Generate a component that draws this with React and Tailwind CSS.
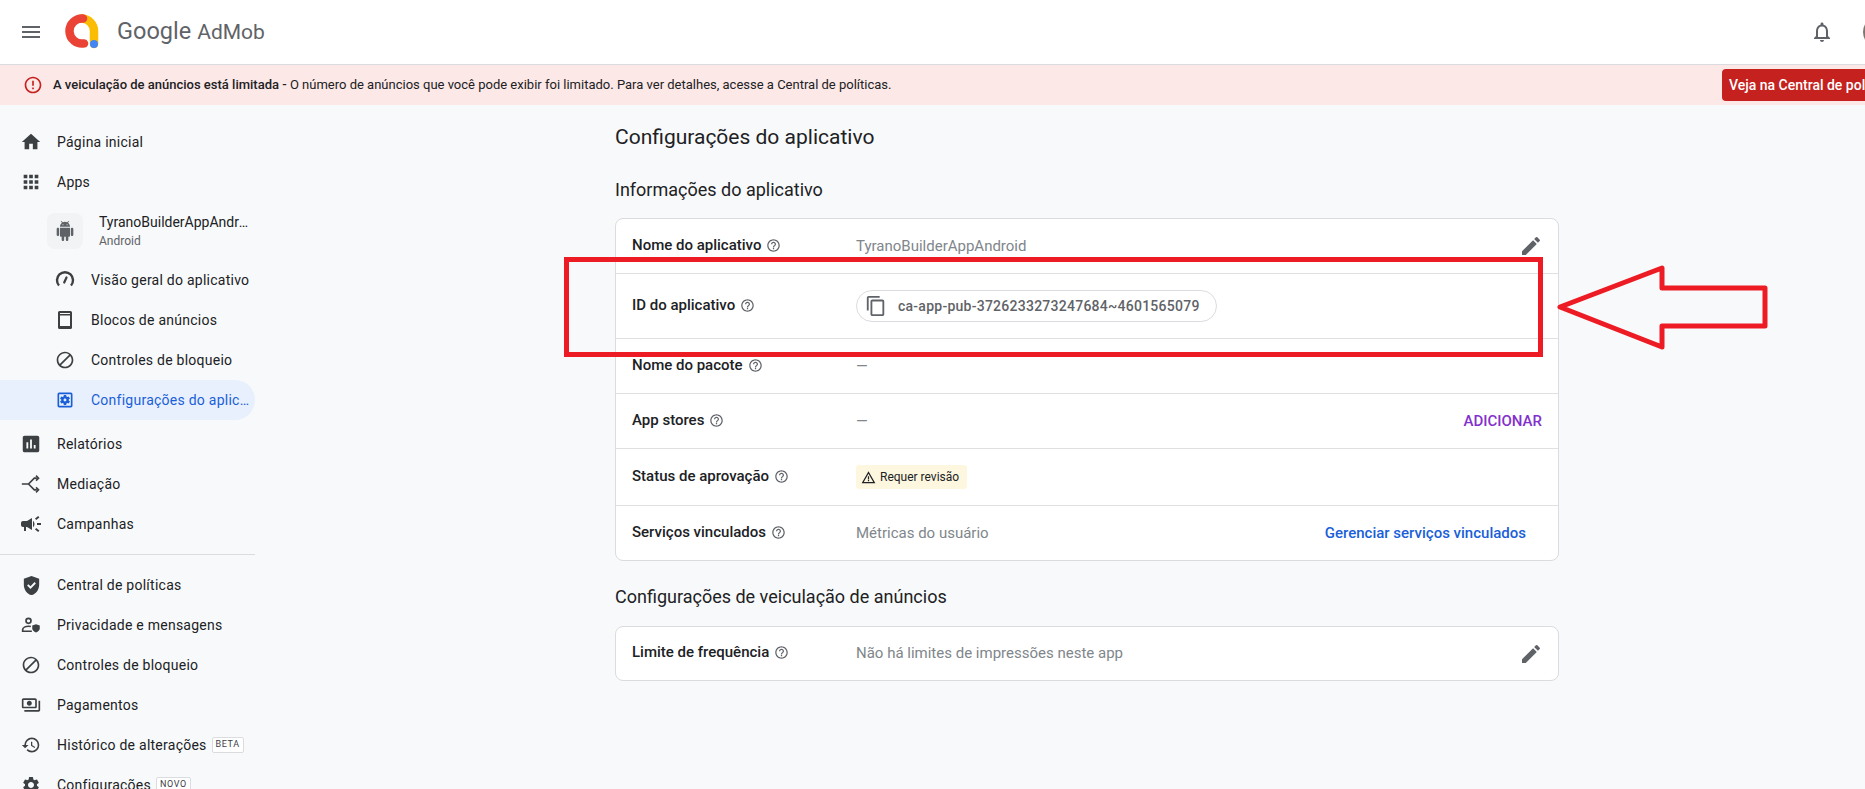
import {
  MdMenu, MdHome, MdApps, MdBlock, MdAssessment, MdCampaign,
  MdGppGood, MdErrorOutline, MdNotificationsNone, MdHelpOutline, MdEdit, MdContentCopy,
  MdWarningAmber, MdOutlineSettingsApplications, MdHistory, MdSettings, MdOutlinePayments,
} from 'react-icons/md'

function Logo() {
  return (
    <svg width="36" height="36" viewBox="0 0 36 36" fill="none" className="shrink-0">
      <path d="M18 4.5A12.5 12.5 0 0 1 30 17V30" stroke="#fbbc04" strokeWidth="8.5" strokeLinecap="round" />
      <path d="M19 4.6A12.5 12.5 0 1 0 20 29.4" stroke="#ea4335" strokeWidth="8.5" strokeLinecap="round" />
      <circle cx="30" cy="30" r="4" fill="#4285f4" />
    </svg>
  )
}

function AndroidIcon() {
  return (
    <svg width="20" height="20" viewBox="0 0 24 24" fill="#5f6368">
      <path d="M6 18c0 .55.45 1 1 1h1v3.500c0 .83.67 1.500 1.500 1.500s1.500-.67 1.500-1.500V19h2v3.500c0 .83.67 1.500 1.500 1.500s1.500-.67 1.500-1.500V19h1c.55 0 1-.45 1-1V8H6v10zM3.500 8C2.670 8 2 8.670 2 9.500v7c0 .83.67 1.500 1.500 1.500S5 17.330 5 16.500v-7C5 8.670 4.330 8 3.500 8zm17 0c-.83 0-1.500.67-1.500 1.500v7c0 .83.67 1.500 1.500 1.500s1.500-.67 1.500-1.500v-7c0-.83-.67-1.500-1.500-1.500zm-4.970-5.840l1.300-1.300c.2-.2.2-.51 0-.71-.2-.2-.51-.2-.71 0l-1.480 1.480C13.850 1.230 12.950 1 12 1c-.96 0-1.860.23-2.660.63L7.850.15c-.2-.2-.51-.2-.71 0-.2.2-.2.51 0 .71l1.310 1.310C6.970 3.260 6 5.010 6 7h12c0-1.990-.97-3.750-2.470-4.840zM10 5H9V4h1v1zm5 0h-1V4h1v1z" />
    </svg>
  )
}

function SpeedIcon() {
  return (
    <svg width="24" height="24" viewBox="0 0 24 24" fill="none" stroke="#3c4043">
      <path d="M6 17.500A8 8 0 1 1 18 17.500" strokeWidth="2.400" />
      <path d="M11.200 14.500l2.300-5" strokeWidth="2.200" strokeLinecap="round" />
    </svg>
  )
}

function AdUnitsIcon() {
  return (
    <svg width="24" height="24" viewBox="0 0 24 24" fill="#3c4043">
      <path fillRule="evenodd" d="M6.500 3h11A1.500 1.500 0 0 1 19 4.500v15a1.500 1.500 0 0 1-1.500 1.500h-11A1.500 1.500 0 0 1 5 19.500v-15A1.500 1.500 0 0 1 6.500 3zM7 5v1h10V5zM7 7.500V18h10V7.500z" />
    </svg>
  )
}

function MediationIcon() {
  return (
    <svg width="20" height="20" viewBox="0 0 24 24" fill="none" stroke="#3c4043" strokeWidth="2">
      <path d="M1 12h8l7-7h3M9 12l7 7h3" />
      <path d="M18 2l3 3-3 3M18 16l3 3-3 3" />
    </svg>
  )
}

function PrivacyIcon() {
  return (
    <svg width="20" height="20" viewBox="0 0 24 24" fill="none">
      <circle cx="9" cy="7" r="3" stroke="#3c4043" strokeWidth="2" />
      <path d="M2 19v-1.500c0-2.500 3.500-4 7-4 1 0 2 .1 2.800.4M1 19.500h12" stroke="#3c4043" strokeWidth="2" />
      <path d="M18 11l4.500 1.500v3.500c0 2.500-1.900 4-4.500 5-2.600-1-4.500-2.500-4.500-5v-3.500z" fill="#3c4043" />
    </svg>
  )
}

function NavItem({ icon: Icon, label, badge, size = 20 }) {
  return (
    <div className="h-10 flex items-center">
      <div className="w-[57px] pl-[19px] shrink-0 text-[#3c4043]">
        <div className="w-6 h-6 flex items-center justify-center">
          <Icon size={size} />
        </div>
      </div>
      <span className="text-[14px] text-[#202124] tracking-[0.25px] whitespace-nowrap">{label}</span>
      {badge && (
        <span className="ml-[5px] h-[16px] px-[3px] flex items-center border border-[#dadce0] bg-white rounded-[2px] text-[9px] tracking-[0.6px] text-[#3c4043]">
          {badge}
        </span>
      )}
    </div>
  )
}

function SubItem({ icon: Icon, label, active, size = 20 }) {
  return (
    <div className={`h-10 w-[255px] flex items-center rounded-r-full ${active ? 'bg-[#e8f0fe] text-[#1a5fd8]' : 'text-[#202124]'}`}>
      <div className={`w-[91px] pl-[53px] shrink-0 ${active ? 'text-[#1a5fd8]' : 'text-[#3c4043]'}`}>
        <div className="w-6 h-6 flex items-center justify-center">
          <Icon size={size} />
        </div>
      </div>
      <span className="text-[14px] tracking-[0.25px] truncate pr-[4px]">{label}</span>
    </div>
  )
}

function Sidebar() {
  return (
    <aside className="w-[255px] shrink-0 pt-[17px]">
      <NavItem icon={MdHome} label="Página inicial" size={22} />
      <NavItem icon={MdApps} label="Apps" size={22} />
      <div className="h-[58px] flex items-center pl-[47px]">
        <div className="w-9 h-9 rounded-lg bg-[#f1f3f4] flex items-center justify-center">
          <AndroidIcon />
        </div>
        <div className="ml-4 w-[156px]">
          <div className="text-[14px] leading-[18px] text-[#202124] truncate">TyranoBuilderAppAndroid</div>
          <div className="text-[12px] leading-[16px] mt-[2px] text-[#5f6368]">Android</div>
        </div>
      </div>
      <SubItem icon={SpeedIcon} label="Visão geral do aplicativo" />
      <SubItem icon={AdUnitsIcon} label="Blocos de anúncios" />
      <SubItem icon={MdBlock} label="Controles de bloqueio" />
      <SubItem icon={MdOutlineSettingsApplications} label="Configurações do aplicativo" active />
      <div className="h-1" />
      <NavItem icon={MdAssessment} label="Relatórios" size={22} />
      <NavItem icon={MediationIcon} label="Mediação" />
      <NavItem icon={MdCampaign} label="Campanhas" size={24} />
      <div className="mt-[10px] mb-[10px] h-px bg-[#dadce0]" />
      <NavItem icon={MdGppGood} label="Central de políticas" size={23} />
      <NavItem icon={PrivacyIcon} label="Privacidade e mensagens" />
      <NavItem icon={MdBlock} label="Controles de bloqueio" />
      <NavItem icon={MdOutlinePayments} label="Pagamentos" />
      <NavItem icon={MdHistory} label="Histórico de alterações" badge="BETA" />
      <NavItem icon={MdSettings} label="Configurações" badge="NOVO" />
    </aside>
  )
}

function Row({ label, height, last, children, right }) {
  return (
    <div className={`${height} flex items-center pl-4 pr-4 ${last ? '' : 'border-b border-[#e0e0e0]'}`}>
      <div className="w-[224px] shrink-0 pb-[2px] flex items-center gap-[5px] text-[15px] font-medium text-[#202124]">
        {label}
        <MdHelpOutline size={15} className="text-[#5f6368]" />
      </div>
      <div className="flex-1 text-[15px] text-[#80868b] flex items-center">{children}</div>
      {right}
    </div>
  )
}

function Content() {
  return (
    <main className="ml-[360px] w-[944px] shrink-0">
      <h1 className="mt-[18px] text-[21px] leading-[28px] text-[#202124]">Configurações do aplicativo</h1>
      <h2 className="mt-[27px] text-[18px] leading-[24px] text-[#202124]">Informações do aplicativo</h2>
      <div className="mt-[16px] bg-white border border-[#dadce0] rounded-lg">
        <Row label="Nome do aplicativo" height="h-[55px]" right={<MdEdit size={24} className="text-[#5f6368] mr-[-1px]" />}>
          TyranoBuilderAppAndroid
        </Row>
        <Row label="ID do aplicativo" height="h-[65px]">
          <div className="h-8 w-[361px] border border-[#dadce0] rounded-full flex items-center pl-[8px] gap-[11px] text-[14px] font-medium text-[#5f6368]">
            <MdContentCopy size={22} />
            <span className="tracking-[0.25px]">ca-app-pub-3726233273247684~4601565079</span>
          </div>
        </Row>
        <Row label="Nome do pacote" height="h-[55px]">—</Row>
        <Row label="App stores" height="h-[55px]" right={<span className="text-[15px] font-medium text-[#8430ce]">ADICIONAR</span>}>
          —
        </Row>
        <Row label="Status de aprovação" height="h-[57px]">
          <div className="h-6 w-[111px] rounded-[3px] bg-[#fef7e0] flex items-center pl-[5px] gap-[4px] text-[12px] text-[#202124]">
            <MdWarningAmber size={15} />
            Requer revisão
          </div>
        </Row>
        <Row label="Serviços vinculados" height="h-[54px]" last right={<span className="mr-4 text-[15px] font-medium text-[#1a5fd8]">Gerenciar serviços vinculados</span>}>
          Métricas do usuário
        </Row>
      </div>
      <h2 className="mt-[24px] text-[18px] leading-[24px] text-[#202124]">Configurações de veiculação de anúncios</h2>
      <div className="mt-[17px] bg-white border border-[#dadce0] rounded-lg">
        <Row label="Limite de frequência" height="h-[53px]" last right={<MdEdit size={24} className="text-[#5f6368] mr-[-1px]" />}>
          Não há limites de impressões neste app
        </Row>
      </div>
    </main>
  )
}

export default function App() {
  return (
    <div className="relative w-[1865px] h-[789px] overflow-hidden bg-[#f8f9fa] font-['Roboto',sans-serif]">
      <header className="h-[65px] bg-white border-b border-[#dadce0] flex items-center">
        <div className="w-[64px] pl-[19px] shrink-0 text-[#5f6368] flex">
          <MdMenu size={24} />
        </div>
        <Logo />
        <div className="ml-[17px] flex items-baseline gap-[6px] text-[#5f6368]">
          <span className="text-[23.500px]">Google</span>
          <span className="text-[21px]">AdMob</span>
        </div>
        <div className="ml-auto flex items-center gap-[29px] mr-[-30px] text-[#5f6368]">
          <MdNotificationsNone size={24} />
          <div className="w-8 h-8 rounded-full bg-[#80746c]" />
        </div>
      </header>
      <div className="h-[40px] bg-[#fce8e6] flex items-center pl-[23px] overflow-hidden">
        <MdErrorOutline size={20} className="text-[#c5221f] shrink-0" />
        <div className="ml-[10px] text-[13px] text-[#202124] whitespace-nowrap">
          <span className="font-medium">A veiculação de anúncios está limitada - </span>
          O número de anúncios que você pode exibir foi limitado. Para ver detalhes, acesse a Central de políticas.
        </div>
        <div className="ml-auto mr-[-60px] shrink-0 h-8 w-[203px] rounded bg-[#c5221f] text-white text-[14px] font-medium flex items-center pl-[7px] whitespace-nowrap">
          Veja na Central de políticas
        </div>
      </div>
      <div className="flex">
        <Sidebar />
        <Content />
      </div>

      {/* marcacao vermelha por cima do print */}
      <div className="absolute left-[564px] top-[257px] w-[979px] h-[100px] border-[5px] border-[#ed1c24]" />
      <svg className="absolute left-[1550px] top-[260px]" width="225" height="95" viewBox="1550 260 225 95" fill="none">
        <path d="M1560 307L1662 268V288H1765V326H1662V347Z" stroke="#ed1c24" strokeWidth="5" strokeLinejoin="round" />
      </svg>
    </div>
  )
}
